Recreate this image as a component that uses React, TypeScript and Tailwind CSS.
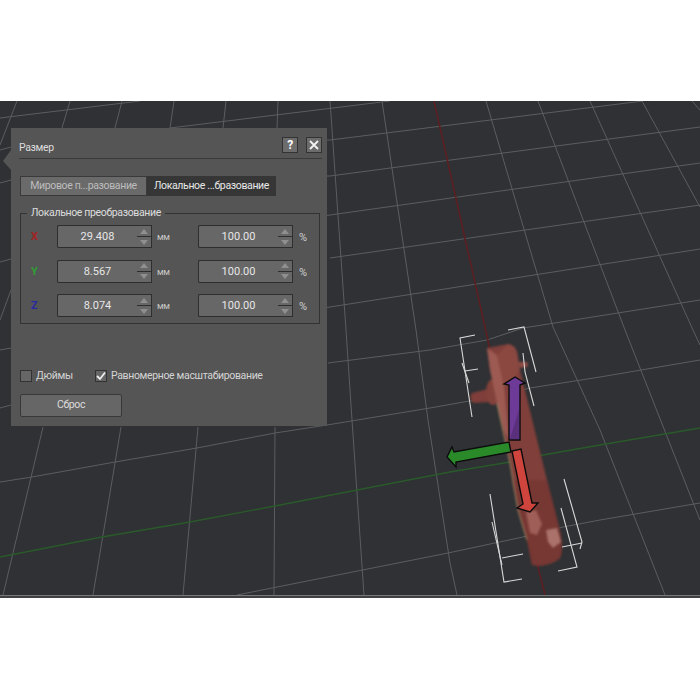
const gridLines = [
  "0,118 140,101",
  "170,128 390,101",
  "0,150 11,147 330,140 643,101",
  "0,183 11,180 330,176 700,127",
  "0,262 11,259 330,215 700,163",
  "330,258 700,205",
  "0,350 11,348 330,307 700,249",
  "328,363 430,350 487,340 523,328 700,300",
  "0,408 11,405",
  "0,482 32,477 115,462 197,448 275,433 327,425 430,408 503,395 530,388 600,377 700,360",
  "237,595 448,553 523,537 563,527 600,520 700,503",
  "17,101 0,145",
  "70,101 62,128",
  "122,101 115,128",
  "174,101 170,128",
  "226,101 223,128",
  "278,101 277,128",
  "11,290 0,320",
  "43,427 3,595",
  "121,427 93,595",
  "198,427 183,595",
  "275,427 274,595",
  "330,101 346,330 352,420 364,595",
  "382,101 416,330 428,420 450,563 457,595",
  "486,101 553,327 600,430 665,595",
  "538,101 625,330 700,520",
  "590,101 693,330 700,345",
  "642,101 700,207",
  "692,101 700,110",
];

const brackets = [
  "475,335 460,338 472,417",
  "462,363 469,383",
  "478,369 465,371",
  "508,330 524,327 536,372",
  "523,353 525,372 534,406",
  "490,494 504,582 522,579",
  "492,522 502,565",
  "502,558 523,554",
  "564,479 582,542 580,549",
  "582,543 562,547",
  "561,508 577,567 558,571",
];

function Scene() {
  return (
    <svg viewBox="0 101 700 494" className="block h-[494px] w-[700px] blur-[0.3px]">
      {gridLines.map((points) => (
        <polyline key={points} points={points} fill="none" stroke="#5b5e60" strokeWidth="1" />
      ))}
      <polyline points="434,101 485,327 537,563 545,595" fill="none" stroke="#5c1f22" strokeWidth="1.6" />
      <polyline
        points="0,557 102,537 190,522 275,506 357,490 450,472 510,462 543,455 600,445 700,428"
        fill="none"
        stroke="#2a5a2a"
        strokeWidth="1.4"
      />

      <g className="blur-[1px]">
        {/* stubs */}
        <path d="M472 393 L488 389 L490 402 L473 403 Q468 398 472 393Z" fill="#7f3e39" />
        <ellipse cx="493" cy="392" rx="7" ry="13" fill="#84423c" />
        <path d="M518 362 L527 362 Q529 365 527 367 L520 368Z" fill="#8c4b44" />

        {/* body */}
        <path
          d="M487 348 L508 344 Q515 345 517 352 L520 370 L547 480 L558 523 Q565 548 560 558 Q556 563 540 566 L532 565 L527 540 L518 510 L510 463 L497 403 L490 370Z"
          fill="#803f3a"
        />
        <path d="M487 348 L497 355 L504 385 L509 440 L504 430 L497 403 L490 370Z" fill="#9c5a52" />
        <path d="M497 355 L508 344 Q515 345 517 352 L520 370 L514 378 L504 385Z" fill="#8a4841" />
        <path d="M547 480 L558 523 Q565 548 560 558 Q556 563 540 566 L532 565 L527 540 L518 510 L512 480Z" fill="#773733" />
        <path d="M526 512 L536 510 L542 524 L537 535 L530 533Z" fill="#9f5f58" />
        <path d="M546 530 L557 528 L561 542 L553 548 L548 542Z" fill="#aa726b" />
        <path d="M497 403 L510 463 L518 510 L527 540" fill="none" stroke="#a89068" strokeWidth="1" />
      </g>

      {/* axis arrows */}
      <polygon
        points="509,440 520,440 520,385 525,383 515,377 504,384 509,385"
        fill="#6d3a97"
        stroke="#0c0c0c"
        strokeWidth="1.4"
      />
      <polygon points="510,439 519,439 519,410" fill="#5a2f7c" />
      <polygon
        points="447,457 452,447 454,452 509,442 511,452 456,462 456,467"
        fill="#2a8a2a"
        stroke="#0c0c0c"
        strokeWidth="1.4"
      />
      <polygon
        points="512,451 521,449 532,503 538,503 530,512 517,508 523,504"
        fill="#cf453e"
        stroke="#0c0c0c"
        strokeWidth="1.4"
      />

      {brackets.map((points) => (
        <polyline key={points} points={points} fill="none" stroke="#d8d8d8" strokeWidth="1.1" />
      ))}

      {/* panel notch */}
      <polygon points="11,150 3,161 11,170" fill="#555555" />
    </svg>
  );
}

function Spin() {
  return (
    <div className="flex h-full w-[15px] flex-col gap-px border-y border-r border-[#2e2e2e] bg-[#2e2e2e]">
      {["5,1 9,6 1,6", "1,1 9,1 5,6"].map((points) => (
        <div key={points} className="flex flex-1 items-center justify-center bg-[#676767]">
          <svg width="10" height="7" viewBox="0 0 10 7">
            <polygon points={points} fill="#8f8f8f" />
          </svg>
        </div>
      ))}
    </div>
  );
}

function NumberField({ value, unit, unitClass }: { value: string; unit: string; unitClass: string }) {
  return (
    <div className="flex h-[23px] items-center">
      <div className="flex h-full w-20 items-center justify-center rounded-l-[2px] border border-r-0 border-[#2e2e2e] bg-[#676767] text-[11px] tracking-normal text-[#e6e6e6]">
        {value}
      </div>
      <Spin />
      <span className={unitClass}>{unit}</span>
    </div>
  );
}

const rows = [
  { axis: "X", color: "text-[#a32323]", mm: "29.408" },
  { axis: "Y", color: "text-[#2f9e35]", mm: "8.567" },
  { axis: "Z", color: "text-[#2a2aa0]", mm: "8.074" },
];

function Checkbox({ checked, label, className }: { checked?: boolean; label: string; className?: string }) {
  return (
    <div className={`flex items-center gap-1 ${className ?? ""}`}>
      <div className="flex size-3 items-center justify-center border border-[#333333] bg-[#666666]">
        {checked && (
          <svg width="10" height="10" viewBox="0 0 10 10">
            <polyline points="1,5 4,8 9,1.5" fill="none" stroke="#eeeeee" strokeWidth="1.8" />
          </svg>
        )}
      </div>
      <span className="pt-px text-[#d4d4d4]">{label}</span>
    </div>
  );
}

function Panel() {
  return (
    <div
      className="absolute left-[11px] top-[27px] flex h-[298px] w-[316px] flex-col bg-[#555555] px-[9px] text-[10.5px] leading-none tracking-[-0.35px]"
      style={{ fontFamily: 'Roboto, sans-serif' }}
    >
      <div className="-ml-px -mr-1 flex h-[31px] items-end justify-between border-b border-[#3a3a3a] pb-[5px]">
        <span className="text-[#dddddd]">Размер</span>
        <div className="flex gap-2">
          <div className="flex size-4 items-center justify-center border border-[#333333] bg-[#6c6c6c] text-[12px] font-bold text-white">
            ?
          </div>
          <div className="flex size-4 items-center justify-center border border-[#333333] bg-[#6c6c6c]">
            <svg width="10" height="10" viewBox="0 0 10 10">
              <path d="M1 1 9 9M9 1 1 9" stroke="#f2f2f2" strokeWidth="1.8" />
            </svg>
          </div>
        </div>
      </div>

      <div className="mt-[17px] flex h-5 w-[256px]">
        <div className="flex w-[127px] items-center justify-center border border-[#3a3a3a] bg-[#6a6a6a] text-[#bdbdbd]">
          Мировое п...разование
        </div>
        <div className="flex w-[129px] items-center justify-center bg-[#363636] text-[#e8e8e8]">
          Локальное ...бразование
        </div>
      </div>

      <div className="relative mt-[17px] h-[111px] w-[300px] border border-[#333333] pl-[10px] pt-[11px]">
        <span className="absolute -top-[6px] left-[6px] bg-[#555555] px-1 text-[#dddddd]">
          Локальное преобразование
        </span>
        <div className="flex flex-col gap-[11.5px]">
          {rows.map((row) => (
            <div key={row.axis} className="flex items-center">
              <span className={`w-[26px] text-[11px] font-bold ${row.color}`}>{row.axis}</span>
              <NumberField value={row.mm} unit="мм" unitClass="ml-[5px] w-[41px] pt-[2px] text-[9px] text-[#c8c8c8]" />
              <NumberField value="100.00" unit="%" unitClass="ml-[6px] pt-[2px] text-[11px] text-[#d0d0d0]" />
            </div>
          ))}
        </div>
      </div>

      <div className="mt-[46px] flex">
        <Checkbox className="w-[75px]" label="Дюймы" />
        <Checkbox checked label="Равномерное масштабирование" />
      </div>

      <div className="mt-3 flex h-[23px] w-[102px] items-center justify-center rounded-[2px] border border-[#383838] bg-[#666666] text-[#dcdcdc]">
        Сброс
      </div>
    </div>
  );
}

export default function App() {
  return (
    <div className="h-[700px] w-[700px] overflow-hidden bg-white pt-[101px]">
      <div className="relative h-[497px] bg-[#2f3134]">
        <Scene />
        <Panel />
        <div className="h-px bg-[#77797b]" />
        <div className="h-[2px] bg-[#3f4042]" />
      </div>
    </div>
  );
}
